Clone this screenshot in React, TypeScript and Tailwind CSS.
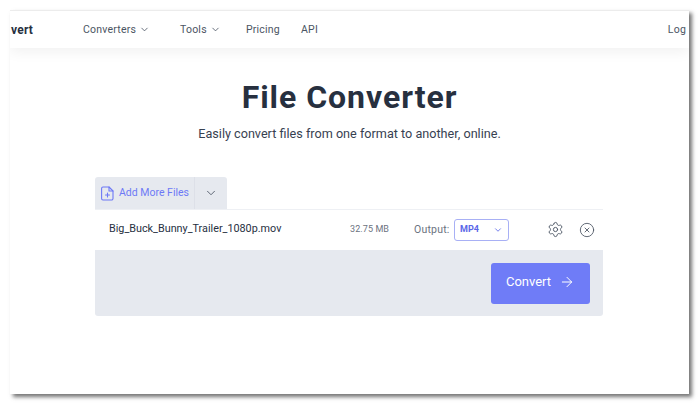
import { ChevronDown, Settings, CircleX, ArrowRight } from "lucide-react";

export default function App() {
  return (
    <div className="w-[700px] h-[405px] bg-white overflow-hidden pt-[10px] pl-[10px] font-['Roboto',sans-serif]">
      <div className="w-[679px] h-[384px] bg-white overflow-hidden shadow-[3px_3px_4px_rgba(0,0,0,0.55)] flex flex-col border-t border-[#ececec]">
        <header className="h-[37px] shrink-0 flex items-center text-[#4b5563] text-[10.5px] tracking-[0.02em] shadow-[0_4px_14px_rgba(0,0,0,0.06)] bg-white">
          <span className="font-bold text-[12px] text-[#27303f] w-[73px] pl-[1px] shrink-0">vert</span>
          <nav className="flex items-center">
            <span className="flex items-center gap-[3px] w-[97px]">Converters <ChevronDown size={11} strokeWidth={1.8} /></span>
            <span className="flex items-center gap-[3px] w-[66px]">Tools <ChevronDown size={11} strokeWidth={1.8} /></span>
            <span className="w-[55px]">Pricing</span>
            <span>API</span>
          </nav>
          <span className="ml-auto mr-[3px]">Log</span>
        </header>
        <main className="flex-1 flex flex-col items-center pt-[29px]">
          <h1 className="text-[32px] leading-[40px] font-bold text-[#27303f] tracking-[0.03em]">File Converter</h1>
          <p className="mt-[8px] text-[12.650px] leading-[18px] text-[#374151]">Easily convert files from one format to another, online.</p>
          <div className="w-[508px] mt-[34px] mr-[1px]">
            <div className="flex w-[132px] h-[32px] bg-[#e6e9ef] rounded-t-[3px] text-[#6d79f6] text-[10.5px]">
              <div className="flex items-center gap-[5px] pl-[6px] w-[100px] border-r border-[#dde0e8] whitespace-nowrap">
                <svg width="13" height="15" viewBox="0 0 13 15" fill="none" stroke="currentColor" strokeWidth="1.1" strokeLinejoin="round" strokeLinecap="round">
                  <path d="M2 1h6l4 4v7.500a1.500 1.500 0 0 1-1.500 1.500h-8.500A1.500 1.500 0 0 1 .6 12.500V2.500A1.500 1.500 0 0 1 2 1z" />
                  <path d="M8 1v4h4M6.500 7v4M4.500 9h4" />
                </svg>
                <span>Add More Files</span>
              </div>
              <div className="flex-1 flex items-center justify-center text-[#4b5563]"><ChevronDown size={14} strokeWidth={1.5} /></div>
            </div>
            <div className="h-[41px] bg-white border-t border-[#eef0f4] flex items-center pl-[14px] pb-[1px] text-[10.8px] text-[#27303f]">
              <span className="w-[241px]">Big_Buck_Bunny_Trailer_1080p.mov</span>
              <span className="w-[64px] text-[9px] text-[#6b7280] tracking-[0.01em]">32.75 MB</span>
              <span className="w-[40px] text-[#6b7280] text-[10.5px] tracking-[0.02em]">Output:</span>
              <div className="w-[55px] h-[22px] border border-[#a8b0f5] rounded-[3px] flex items-center justify-between px-[5px] text-[#5a67e8] text-[9px] font-bold">
                MP4 <ChevronDown size={10} className="text-[#5a67e8]" />
              </div>
              <Settings size={17} strokeWidth={1.3} className="ml-[38px] text-[#4b5563]" />
              <CircleX size={16} strokeWidth={1.3} className="ml-[15px] text-[#4b5563]" />
            </div>
            <div className="h-[66px] bg-[#e6e9ef] rounded-b-[3px] flex items-start justify-end pt-[13px] pr-[13px]">
              <button className="w-[99px] h-[41px] bg-[#6f7cf7] rounded-[3px] text-white text-[13px] pb-[3px] flex items-center justify-center gap-[8px]">
                Convert <ArrowRight size={16} strokeWidth={1.5} />
              </button>
            </div>
          </div>
        </main>
      </div>
    </div>
  );
}
